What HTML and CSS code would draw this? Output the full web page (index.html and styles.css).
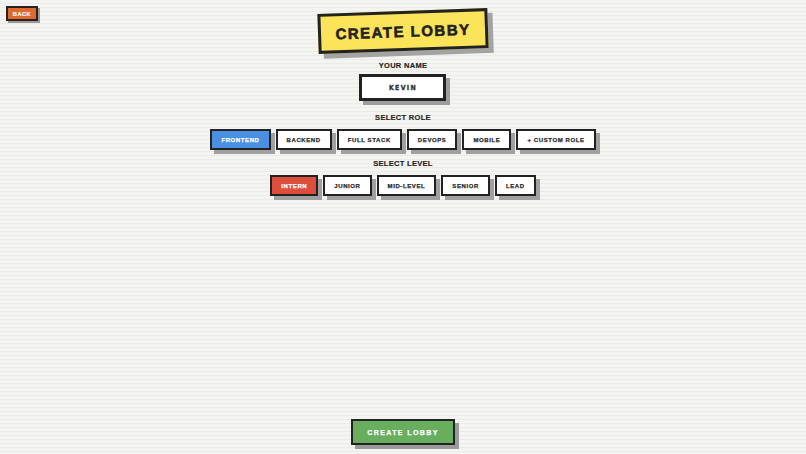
FILE: index.html
```html
<!DOCTYPE html>
<html lang="en">
<head>
    <meta charset="UTF-8">
    <meta name="viewport" content="width=device-width, initial-scale=1.0">
    <title>Create Lobby</title>
    <link rel="stylesheet" href="styles.css">
</head>
<body>
    <button type="button" class="back-btn">BACK</button>
    <div class="page">
        <div class="content">
            <h1 class="title">CREATE LOBBY</h1>

            <label class="field-label" for="player_name">YOUR NAME</label>
            <div class="name-box" id="player_name">KEVIN</div>

            <div class="field-label">SELECT ROLE</div>
            <div class="chip-row">
                <button type="button" class="chip chip-blue">FRONTEND</button>
                <button type="button" class="chip">BACKEND</button>
                <button type="button" class="chip">FULL STACK</button>
                <button type="button" class="chip">DEVOPS</button>
                <button type="button" class="chip">MOBILE</button>
                <button type="button" class="chip">+ CUSTOM ROLE</button>
            </div>

            <div class="field-label">SELECT LEVEL</div>
            <div class="chip-row">
                <button type="button" class="chip chip-red">INTERN</button>
                <button type="button" class="chip">JUNIOR</button>
                <button type="button" class="chip">MID-LEVEL</button>
                <button type="button" class="chip">SENIOR</button>
                <button type="button" class="chip">LEAD</button>
            </div>
        </div>

        <button type="button" class="create-btn">CREATE LOBBY</button>
    </div>
</body>
</html>
```

FILE: styles.css
```css
/* Reset */
* {
    margin: 0;
    padding: 0;
    box-sizing: border-box;
}

/* Lined paper background */
body {
    font-family: 'Liberation Sans', Arial, sans-serif;
    font-weight: 700;
    color: #1f1f1f;
    height: 100vh;
    overflow: hidden;
    background-color: #f4f4f0;
    background-image: repeating-linear-gradient(to bottom, #f4f4f0 0 3px, #ebebe7 3px 4px);
}

button {
    font-family: inherit;
    font-weight: 700;
    cursor: pointer;
}

/* Back button sits over the page in the corner */
.back-btn {
    position: absolute;
    top: 6px;
    left: 6px;
    width: 32px;
    height: 15px;
    background-color: #e2692d;
    color: #ffffff;
    border: 2px solid #2a2222;
    font-size: 5.5px;
    letter-spacing: 0.6px;
    -webkit-text-stroke: 0.2px #ffffff;
    box-shadow: 2px 2px 0 #9a9a9a;
}

.page {
    height: 100%;
    display: flex;
    flex-direction: column;
    align-items: center;
}

.content {
    display: flex;
    flex-direction: column;
    align-items: center;
}

/* Header sticker */
.title {
    margin-top: 11px;
    width: 170px;
    height: 40px;
    display: flex;
    align-items: center;
    justify-content: center;
    background-color: #fbe35a;
    border: 3px solid #222222;
    box-shadow: 5px 5px 0 #a3a3a3;
    transform: rotate(-2deg);
    font-size: 15px;
    font-weight: 900;
    letter-spacing: 1.5px;
    color: #222222;
    -webkit-text-stroke: 0.6px #222222;
}

.field-label {
    font-size: 7.5px;
    letter-spacing: 0.3px;
    line-height: 10px;
    color: #222222;
    -webkit-text-stroke: 0.15px #222222;
}

.title + .field-label {
    margin-top: 10px;
}

.name-box {
    margin-top: 3px;
    width: 87px;
    height: 27px;
    display: flex;
    align-items: center;
    justify-content: center;
    background-color: #ffffff;
    border: 3px solid #222222;
    box-shadow: 4px 4px 0 #9d9d9d;
    font-family: 'DejaVu Sans Condensed', 'DejaVu Sans', sans-serif;
    font-size: 7px;
    letter-spacing: 1.3px;
    color: #333333;
    -webkit-text-stroke: 0.3px #333333;
}

.name-box + .field-label {
    margin-top: 12px;
}

/* Option chips */
.chip-row {
    margin-top: 6px;
    display: flex;
    gap: 5px;
}

.chip-row + .field-label {
    margin-top: 9px;
}

.chip {
    height: 21px;
    padding: 0 9px;
    background-color: #ffffff;
    border: 2px solid #222222;
    box-shadow: 4px 4px 0 #a0a0a0;
    font-size: 6px;
    letter-spacing: 0.6px;
    color: #2a2a2a;
    -webkit-text-stroke: 0.25px #2a2a2a;
}

.chip-blue {
    background-color: #4a90e2;
    color: #ffffff;
    -webkit-text-stroke-color: #ffffff;
}

.chip-red {
    background-color: #dd4f3c;
    color: #ffffff;
    -webkit-text-stroke-color: #ffffff;
}

/* Submit at the bottom of the page */
.create-btn {
    margin-top: auto;
    margin-bottom: 9px;
    width: 104px;
    height: 26px;
    background-color: #69ae5f;
    color: #ffffff;
    border: 2px solid #222222;
    box-shadow: 4px 4px 0 #9a9a9a;
    font-size: 7px;
    letter-spacing: 1.4px;
    -webkit-text-stroke: 0.25px #ffffff;
}
```
